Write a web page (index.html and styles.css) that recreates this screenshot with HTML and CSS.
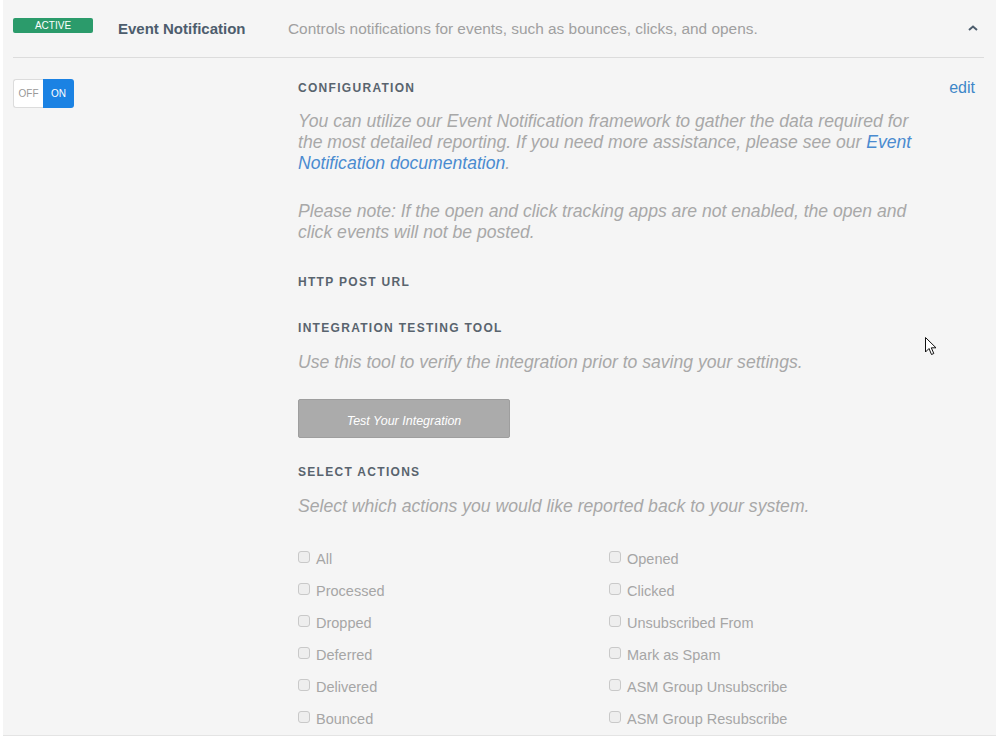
FILE: index.html
```html
<!DOCTYPE html>
<html lang="en">
<head>
    <meta charset="UTF-8">
    <title>Event Notification</title>
    <link rel="stylesheet" href="styles.css">
</head>
<body>
    <div class="panel">
        <div class="panel-header">
            <span class="badge">ACTIVE</span>
            <span class="app-title">Event Notification</span>
            <span class="app-desc">Controls notifications for events, such as bounces, clicks, and opens.</span>
            <svg class="chevron" width="12" height="8" viewBox="0 0 12 8">
                <path d="M2 6 L6 2.5 L10 6" fill="none" stroke="#4d5d6d" stroke-width="2"/>
            </svg>
        </div>

        <div class="panel-body">
            <div class="side">
                <div class="toggle">
                    <span class="toggle-off">OFF</span>
                    <span class="toggle-on">ON</span>
                </div>
            </div>

            <div class="content">
                <div class="section-head">
                    <h4>CONFIGURATION</h4>
                    <a class="edit" href="#">edit</a>
                </div>
                <p class="note">You can utilize our Event Notification framework to gather the data required for the most detailed reporting. If you need more assistance, please see our <a href="#">Event Notification documentation</a>.</p>
                <p class="note note-gap">Please note: If the open and click tracking apps are not enabled, the open and click events will not be posted.</p>

                <h4 class="http-head">HTTP POST URL</h4>

                <h4 class="tool-head">INTEGRATION TESTING TOOL</h4>
                <p class="note">Use this tool to verify the integration prior to saving your settings.</p>
                <button class="test-btn" disabled>Test Your Integration</button>

                <h4 class="actions-head">SELECT ACTIONS</h4>
                <p class="note">Select which actions you would like reported back to your system.</p>

                <div class="actions">
                    <label class="action"><span class="box"></span>All</label>
                    <label class="action"><span class="box"></span>Opened</label>
                    <label class="action"><span class="box"></span>Processed</label>
                    <label class="action"><span class="box"></span>Clicked</label>
                    <label class="action"><span class="box"></span>Dropped</label>
                    <label class="action"><span class="box"></span>Unsubscribed From</label>
                    <label class="action"><span class="box"></span>Deferred</label>
                    <label class="action"><span class="box"></span>Mark as Spam</label>
                    <label class="action"><span class="box"></span>Delivered</label>
                    <label class="action"><span class="box"></span>ASM Group Unsubscribe</label>
                    <label class="action"><span class="box"></span>Bounced</label>
                    <label class="action"><span class="box"></span>ASM Group Resubscribe</label>
                </div>
            </div>
        </div>
    </div>

    <!-- mouse pointer caught in the screenshot -->
    <svg class="cursor" width="13" height="20" viewBox="0 0 13 20">
        <path d="M0.5 0.5 L0.5 15 L4 11.5 L6.5 17.5 L8.8 16.5 L6.3 10.8 L11 10.8 Z" fill="#fff" stroke="#111" stroke-width="1"/>
    </svg>
</body>
</html>
```

FILE: styles.css
```css
body {
    margin: 0;
    background: #fff;
    font-family: 'Liberation Sans', Arial, sans-serif;
    color: #a6a6a6;
}

.panel {
    margin: 0 3px;
    background: #f5f5f5;
    border-bottom: 2px solid #e4e4e4;
    min-height: 733px;
}

.panel-header {
    display: flex;
    align-items: center;
    height: 57px;
    margin: 0 12px 0 10px;
    border-bottom: 1px solid #dcdcdc;
}

.badge {
    width: 80px;
    height: 15px;
    line-height: 15px;
    margin-bottom: 6px;
    background: #2b9b6b;
    border-radius: 2px;
    color: #fff;
    font-size: 10px;
    text-align: center;
}

.app-title {
    width: 170px;
    margin-left: 25px;
    font-size: 15px;
    font-weight: bold;
    color: #4d5d6d;
}

.app-desc {
    flex: 1;
    font-size: 15.4px;
    color: #a0a0a0;
}

.chevron {
    margin-right: 5px;
    margin-bottom: 2px;
}

.panel-body {
    display: flex;
    padding: 21px 12px 0 10px;
}

.side {
    width: 285px;
}

.toggle {
    display: flex;
    width: 61px;
    height: 29px;
    font-size: 10px;
}

.toggle-off {
    width: 29px;
    line-height: 27px;
    text-align: center;
    background: #fff;
    border: 1px solid #dcdcdc;
    border-right: none;
    border-radius: 3px 0 0 3px;
    color: #999;
}

.toggle-on {
    width: 31px;
    line-height: 29px;
    text-align: center;
    background: #1b82e3;
    border-radius: 0 3px 3px 0;
    color: #fff;
}

.content {
    flex: 1;
}

h4 {
    margin: 0;
    font-size: 12px;
    line-height: 16px;
    letter-spacing: 1.3px;
    color: #59646e;
}

.section-head {
    display: flex;
    justify-content: space-between;
    align-items: center;
}

.edit {
    font-size: 16px;
    color: #3d87c8;
    text-decoration: none;
    margin-right: 9px;
}

.note {
    margin: 14px 0 0;
    width: 620px;
    font-size: 17.6px;
    line-height: 21px;
    font-style: italic;
    color: #a8a8a8;
}

.note a {
    color: #4a8bd0;
    text-decoration: none;
}

.note-gap {
    margin-top: 27px;
}

.http-head {
    margin-top: 31px;
}

.tool-head {
    margin-top: 30px;
}

.tool-head + .note,
.actions-head + .note {
    margin-top: 16px;
}

.test-btn {
    display: block;
    margin-top: 26px;
    width: 212px;
    height: 39px;
    padding-top: 5px;
    background: #ababab;
    border: 1px solid #9e9e9e;
    border-radius: 2px;
    color: #fff;
    font-family: inherit;
    font-size: 12.5px;
    font-style: italic;
}

.actions-head {
    margin-top: 26px;
}

.actions {
    display: grid;
    grid-template-columns: 311px 1fr;
    margin-top: 26px;
}

.action {
    display: flex;
    align-items: center;
    height: 32px;
    font-size: 14.5px;
    color: #a6a6a6;
}

.box {
    width: 10px;
    height: 10px;
    margin: 0 6px 5px 0;
    border: 1px solid #c9c9c9;
    border-radius: 3px;
    background: #eeeeee;
}

.cursor {
    position: absolute;
    left: 925px;
    top: 337px;
}
```
